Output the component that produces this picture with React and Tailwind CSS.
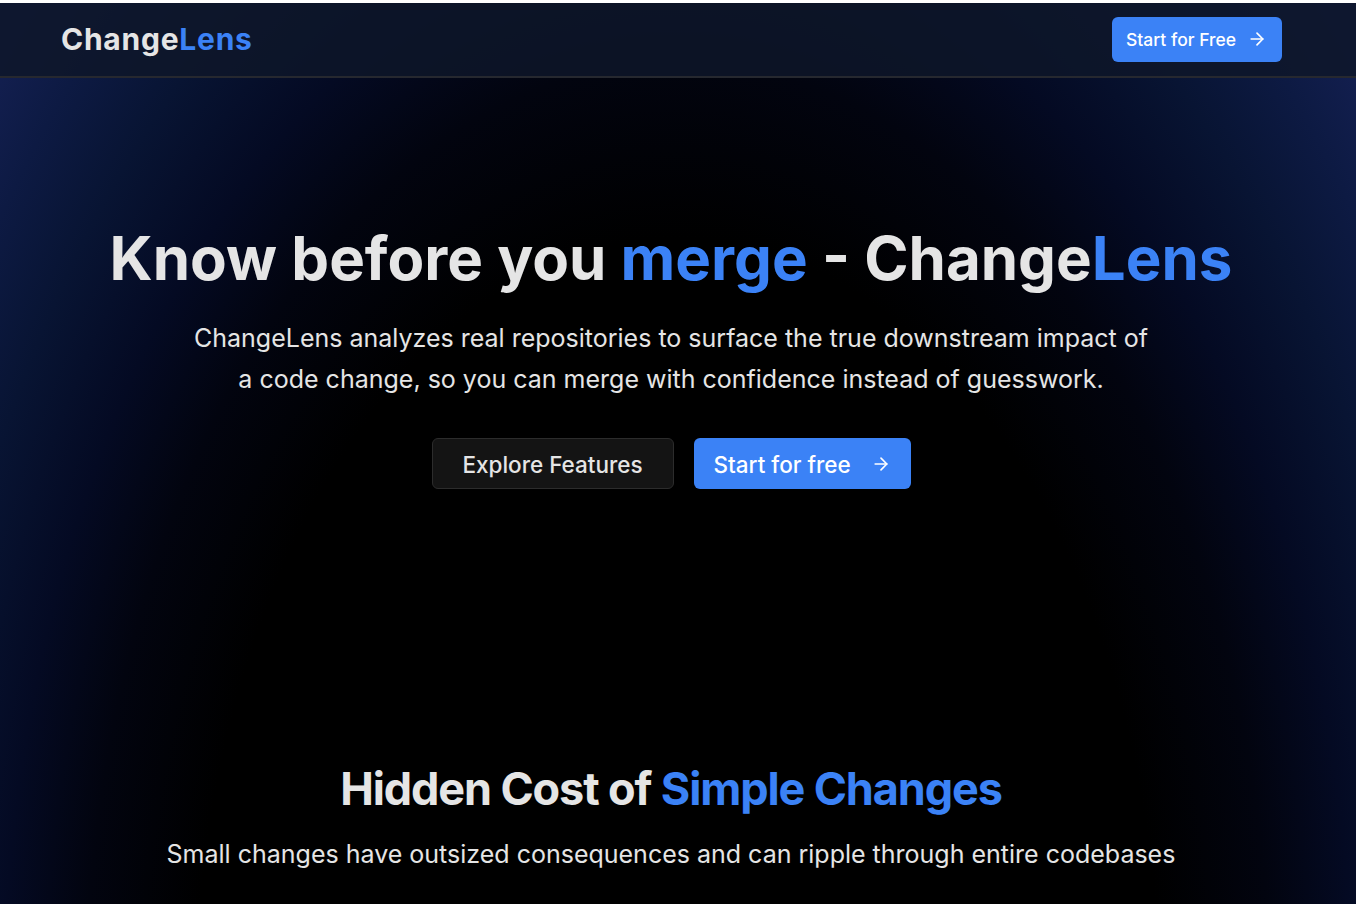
import React from 'react';
import { ArrowRight } from 'lucide-react';

const Brand = () => (
    <>Change<span className="text-[#3b82f6]">Lens</span></>
);

const Header = () => (
    <header className="h-[75px] shrink-0 border-b-2 border-[#26282f] bg-[#0e1629]/85">
        <div className="flex h-[72px] items-center justify-between pl-[61px] pr-[74.5px]">
            <span className="text-[30px] leading-none font-bold tracking-[0.025em]"><Brand /></span>
            <button className="flex h-[45px] w-[170px] items-center justify-between rounded-md bg-[#3b82f6] pl-[14.5px] pr-[15px] text-[17.5px] font-medium text-white">
                <span className="pt-0.5">Start for Free</span>
                <ArrowRight size={20} strokeWidth={2} />
            </button>
        </div>
    </header>
);

const Hero = () => (
    <section className="flex flex-col items-center pt-[142px] pr-[14px] text-center">
        <h1 className="text-[60px] leading-[76px] font-bold whitespace-nowrap">
            Know before you <span className="text-[#3b82f6]">merge</span> - <Brand />
        </h1>
        <p className="mt-[22px] text-[25px] leading-[41px]">
            ChangeLens analyzes real repositories to surface the true downstream impact of<br />
            a code change, so you can merge with confidence instead of guesswork.
        </p>
        <div className="mt-[38px] flex gap-5">
            <button className="h-[51px] w-[242px] rounded-md border border-[#2c2c2c] bg-[#141414] pt-0.5 text-[22.5px] font-medium">
                Explore Features
            </button>
            <button className="flex h-[51px] w-[217px] items-center justify-between rounded-md bg-[#3b82f6] px-5 text-[22.5px] font-medium text-white">
                <span className="pt-0.5">Start for free</span>
                <ArrowRight size={20} strokeWidth={2} />
            </button>
        </div>
    </section>
);

const HiddenCost = () => (
    <section className="pt-[272px] pr-[14px] text-center">
        <h2 className="text-[45px] leading-[56px] font-bold tracking-tight">
            Hidden Cost of <span className="text-[#3b82f6]">Simple Changes</span>
        </h2>
        <p className="mt-[17px] text-[25px] leading-[41px]">
            Small changes have outsized consequences and can ripple through entire codebases
        </p>
    </section>
);

export default function App() {
    return (
        <div className="h-[904px] overflow-hidden bg-white pt-[3px] font-['Inter',sans-serif] text-[#e5e5e5]">
            <main className="flex h-[901px] flex-col bg-[radial-gradient(688px_1102px_at_50%_1007px,#000_70%,#02040f_86%,#040a23_98%,#081433_111%,#0d1a43_122%,#131f50_131%)]">
                <Header />
                <Hero />
                <HiddenCost />
            </main>
        </div>
    );
}
